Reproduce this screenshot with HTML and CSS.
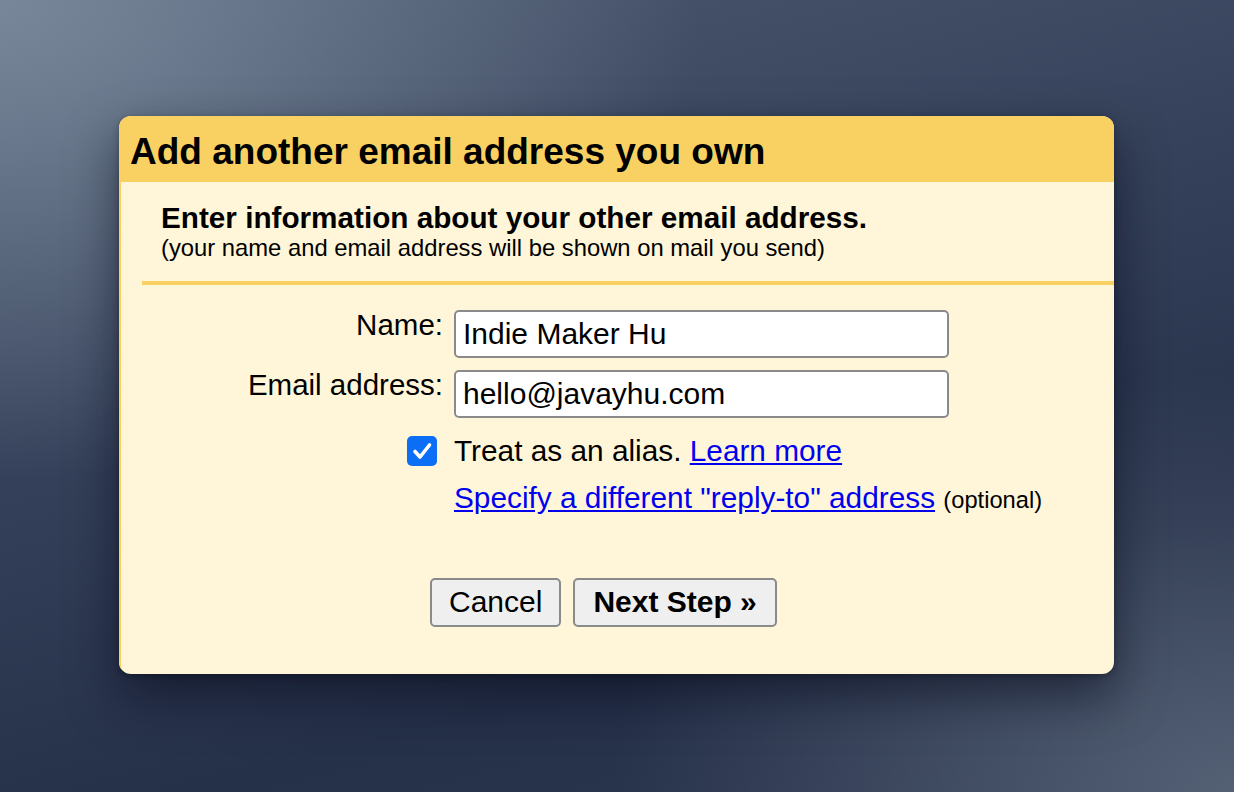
FILE: index.html
```html
<!DOCTYPE html>
<html lang="en">
<head>
    <meta charset="UTF-8">
    <meta name="viewport" content="width=device-width, initial-scale=1.0">
    <title>Add another email address you own</title>
    <link rel="stylesheet" href="styles.css">
</head>
<body>

    <div class="page">
        <div class="dialog">
            <div class="dialog-title">Add another email address you own</div>

            <div class="dialog-body">
                <div class="intro">
                    <div class="intro-head">Enter information about your other email address.</div>
                    <div class="intro-note">(your name and email address will be shown on mail you send)</div>
                </div>

                <div class="separator"></div>

                <div class="form">
                    <label class="form-label" for="name">Name:</label>
                    <input class="field" id="name" type="text" value="Indie Maker Hu">

                    <label class="form-label" for="email">Email address:</label>
                    <input class="field" id="email" type="text" value="hello@javayhu.com">

                    <span class="checkbox" role="checkbox" aria-checked="true">
                        <svg width="30" height="30" viewBox="0 0 30 30">
                            <path d="M8 15.5 L13 21 L22.5 9" fill="none" stroke="#fff" stroke-width="3.6" stroke-linecap="round" stroke-linejoin="round"/>
                        </svg>
                    </span>
                    <div class="form-line alias">Treat as an alias. <a href="#">Learn more</a></div>

                    <span></span>
                    <div class="form-line tight"><a href="#">Specify a different "reply-to" address</a> <span class="small">(optional)</span></div>
                </div>

                <div class="actions">
                    <button type="button">Cancel</button>
                    <button type="button" class="primary">Next Step &raquo;</button>
                </div>
            </div>
        </div>
    </div>

</body>
</html>
```

FILE: styles.css
```css
:root {
    --header: #f8d162;
    --surface: #fff6d9;
    --text: #000;
    --link: #0000ee;
    --control-border: #8a8a8a;
}

body {
    margin: 0;
    width: 1234px;
    height: 792px;
    overflow: hidden;
    font-family: 'Liberation Sans', Arial, sans-serif;
    color: var(--text);
    background:
        radial-gradient(ellipse 700px 480px at 0% 0%, rgba(122, 138, 156, 0.95) 0%, rgba(122, 138, 156, 0) 100%),
        radial-gradient(ellipse 620px 420px at 100% 100%, rgba(86, 98, 118, 0.95) 0%, rgba(86, 98, 118, 0) 100%),
        linear-gradient(165deg, #4d5a71 0%, #36425b 40%, #253049 75%, #2c3750 100%);
}

.page {
    padding: 116px 0 0 119px;
}

.dialog {
    width: 995px;
    border-radius: 12px;
    overflow: hidden;
    background: var(--surface);
    box-shadow: 0 22px 50px rgba(5, 10, 25, 0.55), 0 2px 6px rgba(0, 0, 0, 0.3);
}

.dialog-title {
    background: var(--header);
    height: 61px;
    padding: 5px 11px 0;
    line-height: 61px;
    font-size: 37px;
    font-weight: 700;
}

.dialog-body {
    border-left: 2px solid var(--header);
    padding-bottom: 47px;
}

.intro {
    padding: 19px 0 0 40px;
}

.intro-head {
    font-size: 29.7px;
    font-weight: 700;
    line-height: 34px;
}

.intro-note {
    font-size: 23.8px;
    line-height: 26px;
}

.separator {
    height: 4px;
    background: var(--header);
    margin: 20px 0 0 21px;
}

.form {
    display: grid;
    grid-template-columns: 322px 495px;
    column-gap: 11px;
    row-gap: 12px;
    margin-top: 25px;
    font-size: 29.5px;
}

.form-label {
    text-align: right;
    line-height: 30px;
}

.field {
    box-sizing: border-box;
    width: 495px;
    height: 48px;
    margin: 0;
    padding: 0 7px;
    border: 2px solid var(--control-border);
    border-radius: 5px;
    background: #fff;
    font-family: inherit;
    font-size: 30px;
    color: var(--text);
}

.checkbox {
    justify-self: end;
    align-self: start;
    margin: 6px 6px 0 0;
    width: 30px;
    height: 30px;
    border-radius: 5px;
    background: #0b6ef5;
    display: flex;
}

.form-line {
    font-size: 29.8px;
    line-height: 36px;
    white-space: nowrap;
}

.form-line.alias {
    padding-top: 3px;
}

.form-line.tight {
    line-height: 34px;
}

.form-line a {
    color: var(--link);
    text-decoration: underline;
}

.small {
    font-size: 23.7px;
}

.actions {
    display: flex;
    gap: 12px;
    margin-top: 61px;
    padding-left: 309px;
}

button {
    font-family: inherit;
    font-size: 30px;
    line-height: 34px;
    color: var(--text);
    padding: 5px 17px 6px;
    background: #efefef;
    border: 2px solid var(--control-border);
    border-radius: 5px;
    cursor: pointer;
}

button.primary {
    font-weight: 700;
    padding: 5px 18px 6px;
}
```
